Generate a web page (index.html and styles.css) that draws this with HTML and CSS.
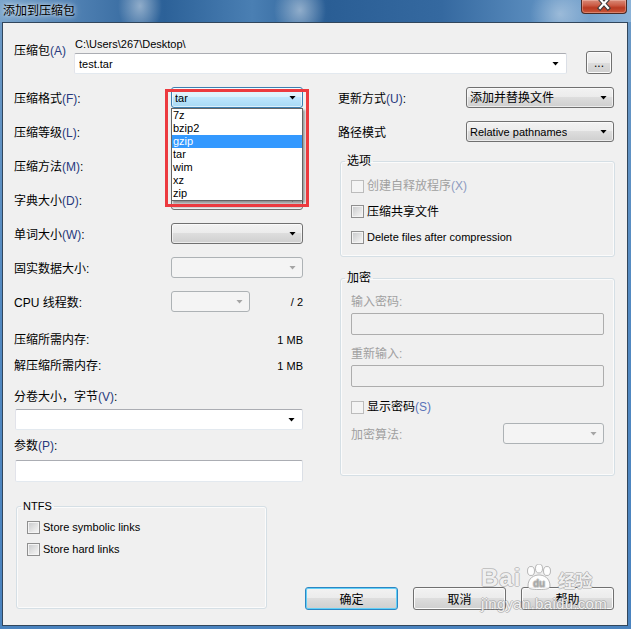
FILE: index.html
```html
<!DOCTYPE html>
<html lang="zh-CN">
<head>
<meta charset="utf-8">
<title>添加到压缩包</title>
<link rel="stylesheet" href="styles.css">
</head>
<body>
<div class="window">
  <div class="titlebar">
    <span class="title">添加到压缩包</span>
    <div class="close">
      <svg width="14" height="11" viewBox="0 0 14 11"><path d="M3 -1 L11 8 M11 -1 L3 8" stroke="#3a3a3a" stroke-width="4.2" stroke-linecap="square" fill="none"/><path d="M3 -1 L11 8 M11 -1 L3 8" stroke="#fff" stroke-width="2.2" stroke-linecap="square" fill="none"/></svg>
    </div>
  </div>
  <div class="client">
    <div class="archive">
      <div class="archive-label">压缩包<span class="mn">(A)</span></div>
      <div class="archive-path">C:\Users\267\Desktop\</div>
      <div class="combo edit archive-combo"><span class="val en">test.tar</span><i class="arrow"></i></div>
      <button class="btn browse">...</button>
    </div>

    <div class="main">
      <div class="col-left">
        <div class="opts">
          <span>压缩格式<span class="mn">(F)</span>:</span>
          <div class="combo hot">
            <span class="val en">tar</span><i class="arrow"></i>
            <ul class="droplist">
              <li>7z</li>
              <li>bzip2</li>
              <li class="sel">gzip</li>
              <li>tar</li>
              <li>wim</li>
              <li>xz</li>
              <li>zip</li>
            </ul>
            <div class="redbox"></div>
          </div>
          <span>压缩等级<span class="mn">(L)</span>:</span>
          <div class="combo"><span class="val"></span><i class="arrow"></i></div>
          <span>压缩方法<span class="mn">(M)</span>:</span>
          <div class="combo"><span class="val"></span><i class="arrow"></i></div>
          <span>字典大小<span class="mn">(D)</span>:</span>
          <div class="combo"><span class="val"></span><i class="arrow"></i></div>
          <span>单词大小<span class="mn">(W)</span>:</span>
          <div class="combo"><span class="val"></span><i class="arrow"></i></div>
          <span>固实数据大小:</span>
          <div class="combo dis"><span class="val"></span><i class="arrow"></i></div>
          <span>CPU 线程数:</span>
          <div class="cpu">
            <div class="combo dis cpu-combo"><span class="val"></span><i class="arrow"></i></div>
            <span class="en">/ 2</span>
          </div>
        </div>

        <div class="mem">
          <div class="mem-row"><span>压缩所需内存:</span><span class="en">1 MB</span></div>
          <div class="mem-row"><span>解压缩所需内存:</span><span class="en">1 MB</span></div>
        </div>

        <div class="field-label">分卷大小，字节<span class="mn">(V)</span>:</div>
        <div class="combo edit wide"><span class="val"></span><i class="arrow"></i></div>
        <div class="field-label params-label">参数<span class="mn">(P)</span>:</div>
        <div class="input wide params"></div>
      </div>

      <div class="col-right">
        <div class="rrow">
          <span>更新方式<span class="mn">(U)</span>:</span>
          <div class="combo"><span class="val">添加并替换文件</span><i class="arrow"></i></div>
        </div>
        <div class="rrow second">
          <span>路径模式</span>
          <div class="combo"><span class="val en">Relative pathnames</span><i class="arrow"></i></div>
        </div>

        <fieldset class="group options">
          <legend>选项</legend>
          <div class="check disabled"><span class="cb"></span><span>创建自释放程序<span class="mn">(X)</span></span></div>
          <div class="check"><span class="cb"></span><span>压缩共享文件</span></div>
          <div class="check"><span class="cb"></span><span class="en">Delete files after compression</span></div>
        </fieldset>

        <fieldset class="group crypt">
          <legend>加密</legend>
          <div class="crypt-label disabled-text">输入密码:</div>
          <div class="input dis"></div>
          <div class="crypt-label second disabled-text">重新输入:</div>
          <div class="input dis"></div>
          <div class="check show"><span class="cb disabled"></span><span>显示密码<span class="mn">(S)</span></span></div>
          <div class="algo">
            <span class="disabled-text">加密算法:</span>
            <div class="combo dis algo-combo"><span class="val"></span><i class="arrow"></i></div>
          </div>
        </fieldset>
      </div>
    </div>

    <div class="bottom">
      <fieldset class="group ntfs">
        <legend class="en">NTFS</legend>
        <div class="check"><span class="cb"></span><span class="en">Store symbolic links</span></div>
        <div class="check"><span class="cb"></span><span class="en">Store hard links</span></div>
      </fieldset>
      <div class="buttons">
        <button class="btn default">确定</button>
        <button class="btn">取消</button>
        <button class="btn">帮助</button>
      </div>
    </div>
  </div>

  <div class="watermark">
    <div class="wm-top"><span class="wm-bai">Bai</span><svg class="wm-paw" width="34" height="26" viewBox="0 0 34 26"><g fill="rgba(255,255,255,0.9)" stroke="rgba(140,140,140,0.6)" stroke-width="1"><ellipse cx="9" cy="7" rx="3.5" ry="4.5"/><ellipse cx="17" cy="4.5" rx="3.5" ry="4.5"/><ellipse cx="25" cy="7" rx="3.5" ry="4.5"/><path d="M6 22 C6 14 12 11 17 11 C22 11 28 14 28 22 C28 25 24 25.5 17 25.5 C10 25.5 6 25 6 22 Z"/></g><text x="17" y="23" font-size="10" font-family="Liberation Sans" font-weight="bold" fill="rgba(160,160,160,0.7)" text-anchor="middle">du</text></svg><span class="wm-cn">经验</span></div>
    <div class="wm-url">jingyan.baidu.com</div>
  </div>
</div>
</body>
</html>
```

FILE: styles.css
```css
* { box-sizing: border-box; }

body {
  margin: 0;
  width: 631px;
  height: 629px;
  overflow: hidden;
  font-family: "Liberation Sans", "Noto Sans CJK SC", sans-serif;
  font-size: 12px;
  color: #000;
  background: #4f86bf;
}

.en { font-size: 11px; }
.mn { color: #27397e; }

.window {
  position: relative;
  width: 631px;
  height: 629px;
  display: flex;
  flex-direction: column;
  background: linear-gradient(180deg, #6d9ac6 0%, #5289c1 50%, #4a83bf 100%);
}

/* Title bar */
.titlebar {
  height: 22px;
  flex: none;
  display: flex;
  align-items: flex-start;
  background:
    radial-gradient(ellipse 22px 30px at 140px 6px, rgba(255,255,255,0.45), rgba(255,255,255,0) 100%),
    radial-gradient(ellipse 26px 30px at 300px 10px, rgba(255,255,255,0.45), rgba(255,255,255,0) 100%),
    radial-gradient(ellipse 30px 30px at 560px 14px, rgba(255,255,255,0.35), rgba(255,255,255,0) 100%),
    linear-gradient(90deg, #7aa5cc 0%, #4f80b2 12%, #2c6198 26%, #4a7fb3 40%, #2a5e95 52%, #3569a0 70%, #5d8fc0 86%, #8cb3d8 100%);
}

.title {
  margin: 2px 0 0 3px;
  line-height: 16px;
  font-size: 12px;
  font-family: "Noto Sans CJK SC", sans-serif;
  color: #000;
  text-shadow: 0 0 4px rgba(255,255,255,0.9), 0 0 8px rgba(255,255,255,0.6);
}

.close {
  margin: 0 4px 0 auto;
  width: 46px;
  height: 14px;
  border: 1px solid #4a2a26;
  border-top: none;
  border-radius: 0 0 4px 4px;
  background: linear-gradient(180deg, #d98a78 0%, #cc5d47 40%, #b93a22 60%, #c9573b 100%);
  box-shadow: inset 0 0 0 1px rgba(255,220,210,0.35);
  display: flex;
  justify-content: center;
  align-items: flex-start;
}

/* Client area */
.client {
  flex: 1;
  margin: 0 3px 3px 2px;
  border: 1px solid #31465c;
  background: #f0f0f0;
  padding: 0 12px 0 11px;
  position: relative;
}

/* Archive row */
.archive {
  margin-top: 15px;
  display: grid;
  grid-template-columns: 60px 493px 19px 26px;
  grid-template-rows: 15px 21px;
}
.archive-label {
  grid-column: 1;
  grid-row: 1 / 3;
  padding-top: 6px;
  line-height: 14px;
}
.archive-path {
  grid-column: 2 / 5;
  grid-row: 1;
  padding-left: 1px;
  line-height: 13px;
  font-size: 11px;
}
.archive-combo { grid-column: 2; grid-row: 2; }
.browse {
  grid-column: 4;
  grid-row: 2;
  margin-top: -2px;
  width: 26px !important;
  height: 23px;
  font-size: 11px;
  line-height: 14px;
}

/* Combos */
.combo {
  height: 21px;
  display: flex;
  align-items: center;
  justify-content: space-between;
  padding: 0 6px 0 3px;
  border: 1px solid #707070;
  border-radius: 3px;
  background: linear-gradient(180deg, #f2f2f2 0%, #ebebeb 50%, #dddddd 50%, #cfcfcf 100%);
  box-shadow: inset 0 0 0 1px rgba(255,255,255,0.6);
  line-height: 16px;
  white-space: nowrap;
}
.combo .val { overflow: hidden; }
.arrow {
  display: block;
  flex: none;
  width: 7px;
  height: 4px;
  background: #000;
  clip-path: polygon(0 0, 100% 0, 50% 100%);
}
.combo.edit {
  background: #fff;
  border-color: #abadb3 #dbdfe6 #e3e9ef #e2e3ea;
  border-radius: 2px;
  box-shadow: none;
  padding: 0 7px 0 4px;
}
.combo.dis {
  background: #f4f4f4;
  border-color: #adb2b5;
  box-shadow: none;
}
.combo.dis .arrow { background: #a5a5a5; }
.combo.hot {
  position: relative;
  border-color: #3c7fb1;
  background: linear-gradient(180deg, #eaf6fd 0%, #d9f0fc 50%, #bee6fd 50%, #a7d9f5 100%);
}

.droplist {
  position: absolute;
  top: 20px;
  left: -1px;
  width: 132px;
  margin: 0;
  padding: 0;
  list-style: none;
  background: #fff;
  border: 1px solid #646464;
  box-shadow: 2px 2px 2px rgba(0,0,0,0.35);
  z-index: 5;
}
.droplist li {
  height: 13px;
  line-height: 13px;
  padding-left: 1px;
  font-size: 11px;
  color: #000;
}
.droplist li.sel {
  background: #3399ff;
  color: #fff;
}
.redbox {
  position: absolute;
  left: -7px;
  top: 1px;
  width: 144px;
  height: 118px;
  border: 3px solid #ec3a3f;
  z-index: 6;
  pointer-events: none;
}

/* Main two columns */
.main {
  margin-top: 13px;
  display: grid;
  grid-template-columns: 289px 1fr;
  column-gap: 35px;
  align-items: start;
}

.opts {
  display: grid;
  grid-template-columns: 157px 132px;
  grid-auto-rows: 21px;
  row-gap: 13px;
  align-items: center;
}
.cpu {
  display: flex;
  align-items: center;
  justify-content: space-between;
}
.cpu-combo { width: 79px; }

.mem { margin-top: 20px; }
.mem-row {
  display: flex;
  justify-content: space-between;
  line-height: 16px;
}
.mem-row + .mem-row { margin-top: 10px; }

.field-label {
  margin-top: 15px;
  line-height: 16px;
}
.field-label + .combo { margin-top: 4px; }
.wide { margin-left: 1px; }
.params-label { margin-top: 8px; }
.params { margin-top: 6px; }

.input {
  height: 22px;
  background: #fff;
  border: 1px solid;
  border-color: #abadb3 #dbdfe6 #e3e9ef #e2e3ea;
  border-radius: 2px;
}
.input.dis {
  background: #f0f0f0;
  border-color: #adadad;
}

/* Right column */
.rrow {
  display: grid;
  grid-template-columns: 128px 148px;
  height: 21px;
  align-items: center;
}
.rrow.second { margin-top: 13px; }

.group {
  margin: 0;
  padding: 0 10px;
  min-width: 0;
  border: 1px solid #d5dfe5;
  border-radius: 3px;
  box-shadow: inset 0 0 0 1px rgba(255,255,255,0.7);
}
.col-right .group { margin-left: 2px; }
.group legend {
  padding: 0 2px;
  margin-left: -6px;
  line-height: 14px;
  font-size: 12px;
}
.group legend.en { font-size: 11px; }

.col-right .options {
  margin-top: 12px;
  height: 103px;
}
.check {
  display: flex;
  align-items: center;
  gap: 3px;
  height: 16px;
  line-height: 16px;
}
.options .check:first-of-type { margin-top: 10px; }
.options .check + .check { margin-top: 9.5px; }

.cb {
  flex: none;
  width: 13px;
  height: 13px;
  border: 1px solid #8f8f8f;
  background: linear-gradient(135deg, #c6c8ca 0%, #e6e6e6 60%, #f8f8f8 100%);
  box-shadow: inset 0 0 0 1px #f4f4f4;
}
.check.disabled { color: #a0a0a0; }
.check.disabled .mn { color: #8d9bc0; }
.check.disabled .cb,
.cb.disabled {
  border-color: #bcbcbc;
  background: #f4f4f4;
  box-shadow: none;
}

.col-right .crypt {
  margin-top: 14px;
  height: 205px;
}
.disabled-text { color: #a0a0a0; }
.crypt-label {
  margin-top: 9px;
  line-height: 16px;
}
.crypt-label.second { margin-top: 11px; }
.crypt-label + .input { margin-top: 3px; }
.check.show { margin-top: 12px; }
.check.show .mn { color: #5a74b8; }
.algo {
  margin-top: 8px;
  display: flex;
  align-items: center;
  justify-content: space-between;
  height: 21px;
}
.algo-combo { width: 101px; }

/* Bottom */
.bottom {
  margin-top: 17px;
  display: flex;
  align-items: flex-start;
}
.ntfs {
  margin-left: 2px;
  width: 251px;
  height: 110px;
}
.ntfs .check:first-of-type { margin-top: 6px; }
.ntfs .check + .check { margin-top: 6px; }

.buttons {
  margin: 88px 1px 0 auto;
  display: flex;
  gap: 15px;
}
.btn {
  font-family: "Liberation Sans", "Noto Sans CJK SC", sans-serif;
  font-size: 12px;
  width: 93px;
  height: 23px;
  padding: 0;
  color: #000;
  border: 1px solid #707070;
  border-radius: 3px;
  background: linear-gradient(180deg, #f2f2f2 0%, #ebebeb 50%, #dddddd 50%, #cfcfcf 100%);
  box-shadow: inset 0 0 0 1px #fbfbfb;
}
.btn.default {
  border-color: #2c86c3;
  box-shadow: inset 0 0 0 1px #63d0f7;
}

/* Watermark overlay */
.watermark {
  position: absolute;
  left: 481px;
  top: 562px;
  z-index: 10;
  pointer-events: none;
  color: rgba(255,255,255,0.85);
  font-family: "Liberation Sans", sans-serif;
  font-weight: bold;
  text-shadow: 1px 0 0 rgba(150,150,150,0.5), -1px 0 0 rgba(150,150,150,0.5), 0 1px 0 rgba(150,150,150,0.5), 0 -1px 0 rgba(150,150,150,0.5);
}
.wm-top {
  display: flex;
  align-items: flex-end;
  height: 28px;
}
.wm-bai {
  font-size: 24px;
  line-height: 24px;
  letter-spacing: 1px;
}
.wm-paw { margin-left: 1px; }
.wm-cn {
  font-family: "Noto Sans CJK SC", sans-serif;
  font-size: 17px;
  line-height: 20px;
  margin-left: 2px;
}
.wm-url {
  margin-top: 6px;
  font-size: 15px;
  line-height: 16px;
  font-weight: normal;
  letter-spacing: 0.3px;
}
```
